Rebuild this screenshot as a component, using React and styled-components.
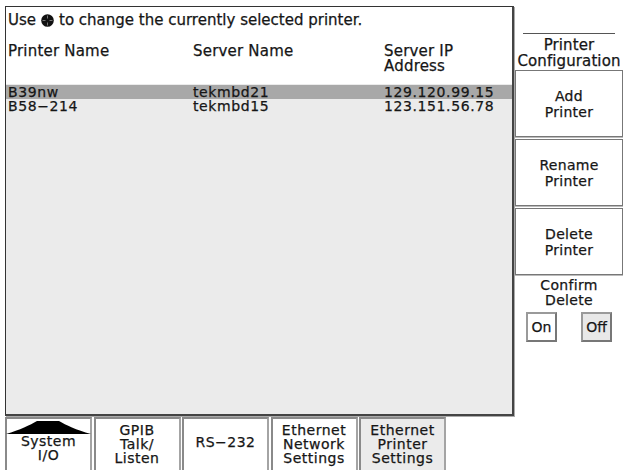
import React from "react";
import styled, { createGlobalStyle } from "styled-components";

const Global = createGlobalStyle`
  html, body { margin: 0; padding: 0; background: #fff; overflow: hidden; }
  body {
    font-family: "DejaVu Sans", "Liberation Sans", sans-serif;
    color: #161616;
    -webkit-text-stroke: 0.25px #161616;
  }
`;

const Screen = styled.div`
  width: 624px;
  height: 470px;
  display: flex;
  flex-direction: column;
  overflow: hidden;
  font-size: 14px;
`;

const Upper = styled.div`
  display: flex;
  height: 417px;
  padding: 6px 0 0 5px;
  box-sizing: border-box;
`;

const MainPanel = styled.section`
  width: 509px;
  height: 410px;
  box-sizing: border-box;
  border-top: 1px solid #333;
  border-left: 1px solid #333;
  border-right: 2px solid #444;
  border-bottom: 2px solid #444;
  box-shadow: 1px 1px 0 #aaa;
  display: flex;
  flex-direction: column;
  background: #fff;
`;

const Hint = styled.div`
  display: flex;
  align-items: center;
  gap: 5px;
  height: 22px;
  padding: 2px 0 0 2px;
  font-size: 15px;
  white-space: nowrap;
`;

const HeaderRow = styled.div`
  display: grid;
  grid-template-columns: 185px 191px 1fr;
  padding: 13px 0 0 2px;
  height: 53px;
  box-sizing: border-box;
  font-size: 15px;
  letter-spacing: 0.2px;
  line-height: 15px;
`;

const List = styled.div`
  flex: 1;
  background: #ebebeb;
  padding-top: 1px;
`;

const DataRow = styled.div`
  display: grid;
  grid-template-columns: 185px 191px 1fr;
  padding-left: 2px;
  height: 14px;
  line-height: 14px;
  letter-spacing: 0.6px;
  background: ${(p) => (p.$selected ? "#a8a8a8" : "transparent")};
`;

const SidePanel = styled.aside`
  width: 110px;
  display: flex;
  flex-direction: column;
  align-items: stretch;
  padding-top: 27px;
  box-sizing: border-box;
`;

const Rule = styled.div`
  height: 1px;
  background: #555;
  margin: 0 9px 0 9px;
`;

const SideTitle = styled.div`
  text-align: center;
  line-height: 16px;
  padding: 3px 0 1px 0;
  font-size: 15px;
  letter-spacing: 0.1px;
  white-space: nowrap;
`;

const SideButton = styled.div`
  height: 67px;
  margin: 0 1px 2px 1px;
  box-sizing: border-box;
  border: 1px solid #777;
  box-shadow: 0 1px 0 #bbb;
  background: #fff;
  display: flex;
  align-items: center;
  justify-content: center;
  text-align: center;
  line-height: 16px;
  letter-spacing: 0.3px;
`;

const ToggleGroup = styled.div`
  display: flex;
  flex-direction: column;
  align-items: center;
  padding-top: 1px;
`;

const ToggleLabel = styled.div`
  text-align: center;
  line-height: 15px;
  letter-spacing: 0.3px;
`;

const ToggleRow = styled.div`
  display: flex;
  justify-content: space-between;
  width: 86px;
  margin-top: 4px;
`;

const Toggle = styled.div`
  width: 31px;
  height: 30px;
  box-sizing: border-box;
  border: 2px solid #9a9a9a;
  border-right-color: #777;
  border-bottom-color: #777;
  background: ${(p) => (p.$active ? "#e8e8e8" : "#fff")};
  display: flex;
  align-items: center;
  justify-content: center;
`;

const TabBar = styled.nav`
  display: flex;
  gap: 1.5px;
  padding-left: 5px;
  height: 53px;
`;

const Tab = styled.div`
  width: 87px;
  height: 56px;
  box-sizing: border-box;
  border: 2px solid #a4a4a4;
  border-left-color: #8a8a8a;
  border-top-color: #8a8a8a;
  background: ${(p) => (p.$active ? "#ebebeb" : "#fff")};
  display: flex;
  flex-direction: column;
  align-items: center;
  justify-content: flex-start;
  padding-top: ${(p) => (p.$top ? "2px" : "4px")};
  line-height: 14px;
  text-align: center;
  letter-spacing: 0.5px;
`;

const TabText = styled.div`
  padding-top: ${(p) => (p.$center ? "12px" : "0")};
`;

const Knob = () => (
  <svg width="13" height="13" viewBox="0 0 13 13">
    <circle cx="6.5" cy="6.5" r="6.3" fill="#111" />
    <path d="M6.5 1.5v3M6.5 8.5v3M1.5 6.5h3M8.5 6.5h3" stroke="#777" strokeWidth="1" />
  </svg>
);

const Mountain = () => (
  <svg width="85" height="13" viewBox="0 0 85 13">
    <path d="M0 13 C14 9 24 4 31 0 L53 0 C60 4 70 9 85 13 Z" fill="#000" />
  </svg>
);

const rows = [
  { name: "B39nw", server: "tekmbd21", ip: "129.120.99.15", selected: true },
  { name: "B58\u2212214", server: "tekmbd15", ip: "123.151.56.78" },
];

export default function App() {
  return (
    <>
      <Global />
      <Screen>
        <Upper>
          <MainPanel>
            <Hint>
              Use <Knob /> to change the currently selected printer.
            </Hint>
            <HeaderRow>
              <div>Printer Name</div>
              <div>Server Name</div>
              <div>
                Server IP
                <br />
                Address
              </div>
            </HeaderRow>
            <List>
              {rows.map((r) => (
                <DataRow key={r.name} $selected={r.selected}>
                  <div>{r.name}</div>
                  <div>{r.server}</div>
                  <div>{r.ip}</div>
                </DataRow>
              ))}
            </List>
          </MainPanel>
          <SidePanel>
            <Rule />
            <SideTitle>
              Printer
              <br />
              Configuration
            </SideTitle>
            <SideButton>
              Add
              <br />
              Printer
            </SideButton>
            <SideButton>
              Rename
              <br />
              Printer
            </SideButton>
            <SideButton>
              Delete
              <br />
              Printer
            </SideButton>
            <ToggleGroup>
              <ToggleLabel>
                Confirm
                <br />
                Delete
              </ToggleLabel>
              <ToggleRow>
                <Toggle>On</Toggle>
                <Toggle $active>Off</Toggle>
              </ToggleRow>
            </ToggleGroup>
          </SidePanel>
        </Upper>
        <TabBar>
          <Tab $top>
            <Mountain />
            <div>System</div>
            <div>I/O</div>
          </Tab>
          <Tab>
            <div>GPIB</div>
            <div>Talk/</div>
            <div>Listen</div>
          </Tab>
          <Tab>
            <TabText $center>{"RS\u2212232"}</TabText>
          </Tab>
          <Tab>
            <div>Ethernet</div>
            <div>Network</div>
            <div>Settings</div>
          </Tab>
          <Tab $active>
            <div>Ethernet</div>
            <div>Printer</div>
            <div>Settings</div>
          </Tab>
        </TabBar>
      </Screen>
    </>
  );
}
